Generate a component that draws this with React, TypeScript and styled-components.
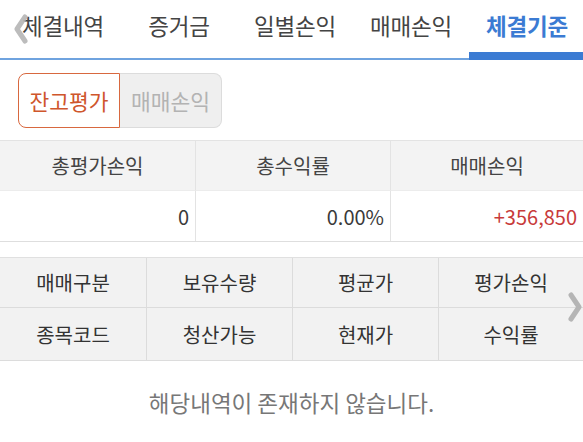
import React from 'react';
import styled, { createGlobalStyle } from 'styled-components';

const GlobalStyle = createGlobalStyle`
  html, body {
    margin: 0;
    padding: 0;
    background: #ffffff;
  }
  body {
    font-family: "Noto Sans CJK KR", "Noto Sans", sans-serif;
  }
`;

const tabs = ['체결내역', '증거금', '일별손익', '매매손익', '체결기준'];
const activeTab = 4;

const summaryHeads = ['총평가손익', '총수익률', '매매손익'];
const summaryValues = [
  { text: '0', tone: 'normal' },
  { text: '0.00%', tone: 'normal' },
  { text: '+356,850', tone: 'up' },
] as const;

const gridRows = [
  ['매매구분', '보유수량', '평균가', '평가손익'],
  ['종목코드', '청산가능', '현재가', '수익률'],
];

const Chevron: React.FC<{ dir: 'left' | 'right' }> = ({ dir }) => (
  <svg width="14" height="30" viewBox="0 0 14 30">
    <path
      d={dir === 'left' ? 'M11 3 L3 15 L11 27' : 'M3 3 L11 15 L3 27'}
      fill="none"
      stroke="#b5b5b5"
      strokeWidth="5"
      strokeLinecap="round"
      strokeLinejoin="round"
    />
  </svg>
);

export default function App() {
  return (
    <>
      <GlobalStyle />
      <Page>
        <TabBar>
          {tabs.map((t, i) => (
            <Tab key={t} active={i === activeTab}>{t}</Tab>
          ))}
          <LeftArrow><Chevron dir="left" /></LeftArrow>
        </TabBar>

        <Segment>
          <SegButton active>잔고평가</SegButton>
          <SegButton>매매손익</SegButton>
        </Segment>

        <SummaryTable>
          {summaryHeads.map((h) => (
            <HeadCell key={h}>{h}</HeadCell>
          ))}
          {summaryValues.map((v) => (
            <ValueCell key={v.text} tone={v.tone}>{v.text}</ValueCell>
          ))}
        </SummaryTable>

        <GridWrap>
          <ColumnGrid>
            {gridRows.flat().map((c) => (
              <GridCell key={c}>{c}</GridCell>
            ))}
          </ColumnGrid>
          <RightArrow><Chevron dir="right" /></RightArrow>
        </GridWrap>

        <Empty>해당내역이 존재하지 않습니다.</Empty>
      </Page>
    </>
  );
}

const Page = styled.div`
  width: 583px;
  height: 442px;
  overflow: hidden;
  background: #ffffff;
`;

const TabBar = styled.div`
  position: relative;
  display: flex;
  height: 58px;
  padding-left: 5px;
  border-bottom: 2px solid #6fa3df;
`;

const Tab = styled.div<{ active?: boolean }>`
  flex: 0 0 116px;
  height: ${(p) => (p.active ? '60px' : '58px')};
  margin-bottom: ${(p) => (p.active ? '-2px' : '0')};
  box-sizing: border-box;
  padding-top: 9px;
  text-align: center;
  font-size: 22.5px;
  line-height: 32px;
  color: ${(p) => (p.active ? '#3b7bd3' : '#444444')};
  font-weight: ${(p) => (p.active ? 700 : 400)};
  box-shadow: ${(p) => (p.active ? 'inset 0 -8px 0 #3b7bd3' : 'none')};
  white-space: nowrap;
  letter-spacing: -0.2px;
`;

const LeftArrow = styled.div`
  position: absolute;
  left: 14px;
  top: 14px;
  opacity: 0.9;
`;

const Segment = styled.div`
  display: flex;
  margin: 13px 0 0 18px;
  height: 55px;
`;

const SegButton = styled.div<{ active?: boolean }>`
  width: 102px;
  box-sizing: border-box;
  display: flex;
  align-items: center;
  justify-content: center;
  font-size: 21.5px;
  color: ${(p) => (p.active ? '#cf562c' : '#b3b3b3')};
  background: ${(p) => (p.active ? '#ffffff' : '#efefef')};
  border: ${(p) => (p.active ? '1.5px solid #d8683f' : '1px solid #dcdcdc')};
  border-left: ${(p) => (p.active ? '1.5px solid #d8683f' : 'none')};
  border-radius: ${(p) => (p.active ? '8px 0 0 8px' : '0 8px 8px 0')};
`;

const SummaryTable = styled.div`
  display: grid;
  grid-template-columns: 195px 195px 193px;
  grid-template-rows: 50px 50px;
  margin-top: 12px;
  border-top: 1px solid #e3e3e3;
  border-bottom: 1px solid #dedede;
`;

const HeadCell = styled.div`
  display: flex;
  align-items: center;
  justify-content: center;
  background: #f3f3f3;
  font-size: 20px;
  color: #444444;
  border-bottom: 1px solid #ececec;
  & + & {
    border-left: 1px solid #e3e3e3;
  }
`;

const ValueCell = styled.div<{ tone: 'normal' | 'up' }>`
  display: flex;
  align-items: center;
  justify-content: flex-end;
  padding-right: 6px;
  font-size: 20px;
  color: ${(p) => (p.tone === 'up' ? '#c83a3a' : '#3a3a3a')};
  &:nth-child(5), &:nth-child(6) {
    border-left: 1px solid #e3e3e3;
  }
`;

const GridWrap = styled.div`
  position: relative;
  margin-top: 15px;
`;

const ColumnGrid = styled.div`
  display: grid;
  grid-template-columns: 146px 146px 146px 145px;
  grid-template-rows: 50px 52px;
  background: #f2f2f2;
  border-top: 1px solid #e0e0e0;
  border-bottom: 1px solid #dcdcdc;
`;

const GridCell = styled.div`
  display: flex;
  align-items: center;
  justify-content: center;
  font-size: 20px;
  color: #333333;
  border-left: 1px solid #dcdcdc;
  &:nth-child(4n + 1) {
    border-left: none;
  }
  &:nth-child(-n + 4) {
    border-bottom: 1px solid #dcdcdc;
  }
`;

const RightArrow = styled.div`
  position: absolute;
  right: 1px;
  top: 35px;
`;

const Empty = styled.div`
  padding-top: 25px;
  text-align: center;
  font-size: 22.5px;
  line-height: 32px;
  color: #777777;
`;
